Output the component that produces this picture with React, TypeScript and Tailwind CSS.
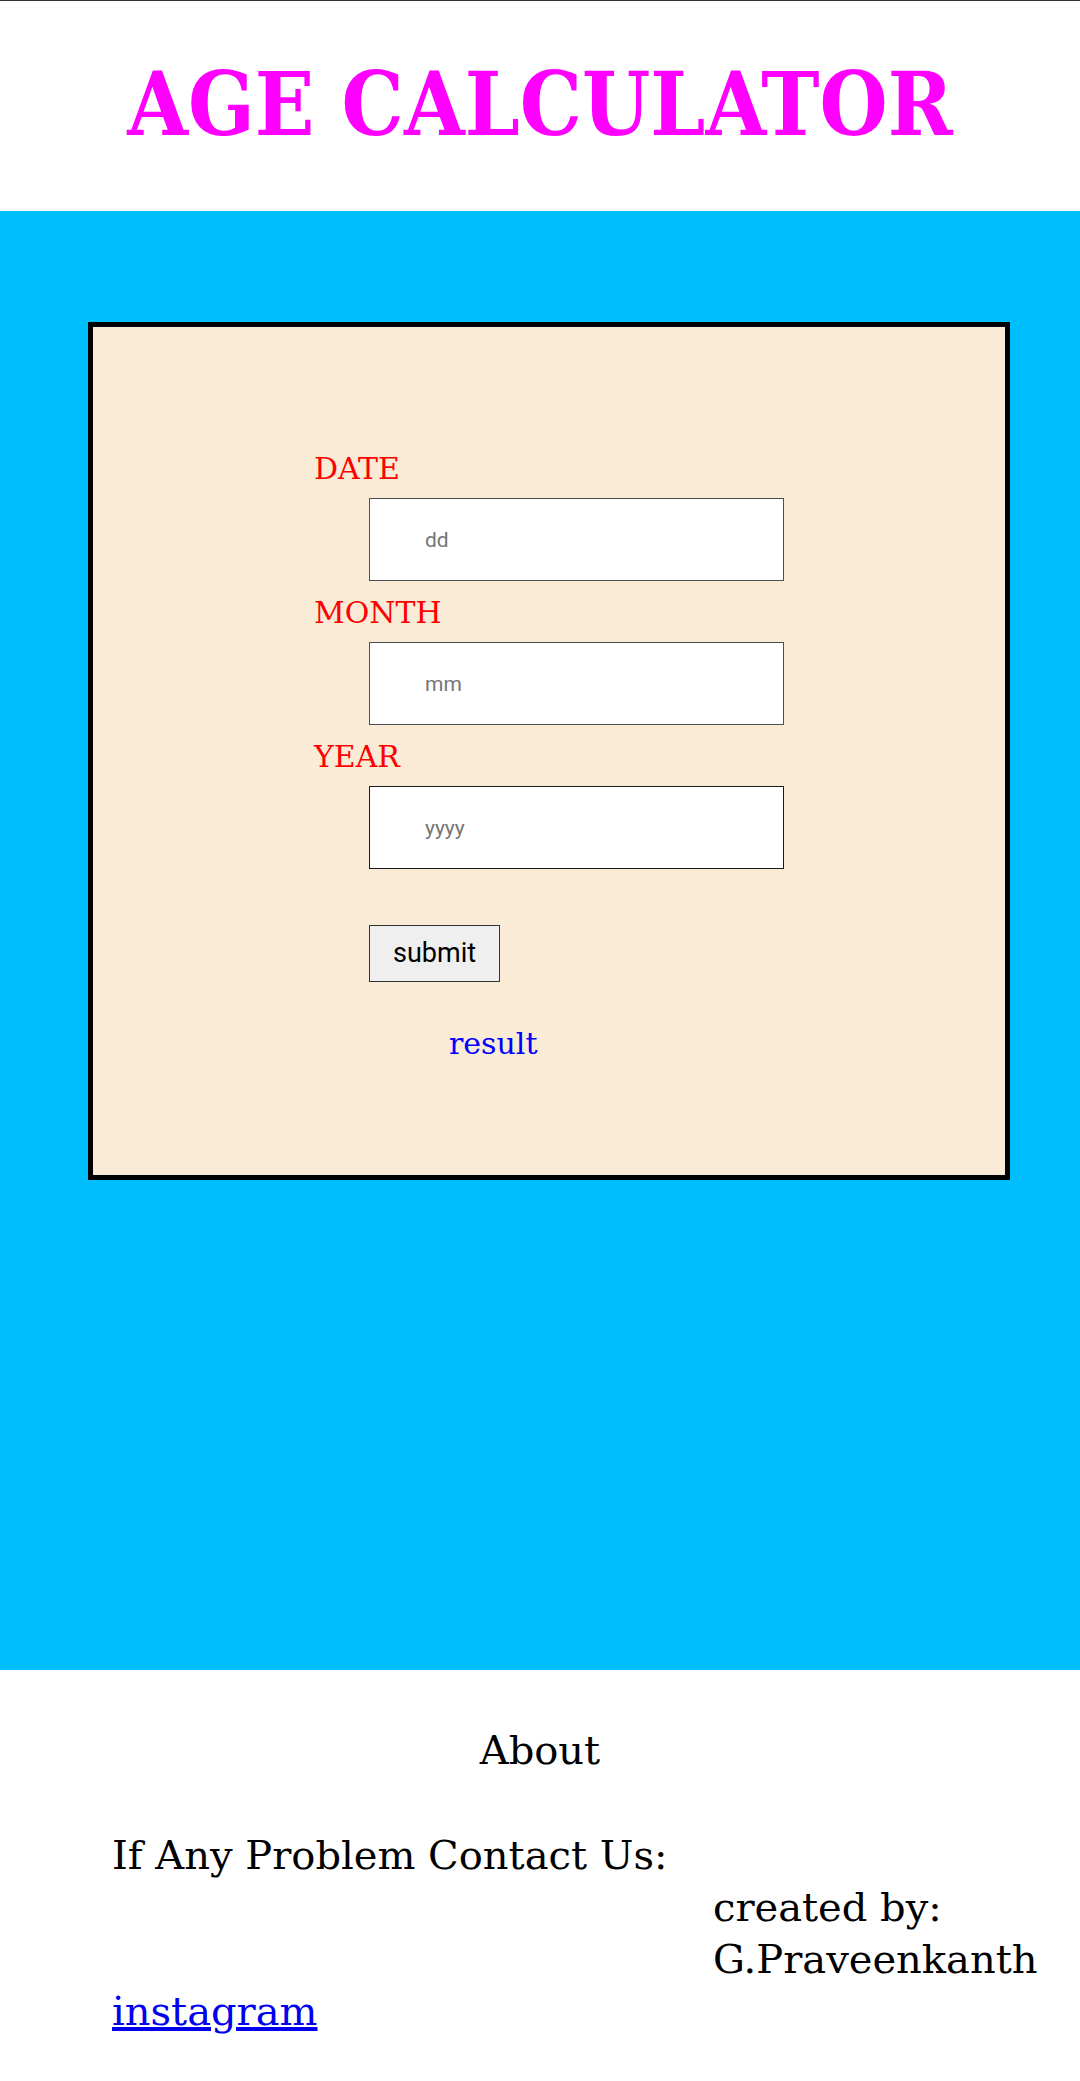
import React from 'react';

const fields = [
  { label: 'DATE', placeholder: 'dd', border: 'border-[#4d4d4d]' },
  { label: 'MONTH', placeholder: 'mm', border: 'border-[#4d4d4d]' },
  { label: 'YEAR', placeholder: 'yyyy', border: 'border-[#1a1a1a]' },
];

export default function App() {
  return (
    <div className="w-[1080px] min-h-[2081px] bg-white font-['DejaVu_Serif',serif]">
      {/* Header */}
      <header className="h-[211px] border-t border-[#333] bg-white pt-[53px]">
        <h1 className="text-center text-[87px] font-bold leading-[1.164] text-[#ff00ff] font-stretch-condensed">
          AGE CALCULATOR
        </h1>
      </header>

      {/* Calculator */}
      <main className="h-[1459px] bg-[#00bfff] pt-[111px]">
        <div className="ml-[88px] h-[858px] w-[922px] border-[5px] border-black bg-[#faebd7] pt-[124px]">
          <div className="pl-[221px]">
            {fields.map((f, i) => (
              <div key={f.label} className={i === 0 ? '' : 'mt-[14px]'}>
                <p className="text-[30px] leading-[35px] text-[#ff0000]">{f.label}</p>
                <input
                  type="text"
                  placeholder={f.placeholder}
                  className={`mt-[12px] ml-[55px] block h-[83px] w-[415px] border ${f.border} bg-white pl-[55px] font-['Roboto',sans-serif] text-[21px] text-black outline-none placeholder:text-[#757575]`}
                />
              </div>
            ))}
            <button className="mt-[56px] ml-[55px] block h-[57px] w-[131px] border border-[#333] bg-[#efefef] font-['Roboto',sans-serif] text-[27px] text-black">
              submit
            </button>
            <p className="mt-[44px] ml-[135px] text-[30px] leading-[35px] text-[#0000ff]">result</p>
          </div>
        </div>
      </main>

      {/* Footer */}
      <footer className="bg-white pt-[54px] pb-[42px] text-[40px] leading-[52px] text-black">
        <h2 className="text-center">About</h2>
        <div className="mt-[53px] pl-[112px]">
          <p>If Any Problem Contact Us:</p>
          <p className="pl-[601px]">
            created by:
            <br />
            G.Praveenkanth
          </p>
          <a href="#" className="text-[#0000ee] underline">
            instagram
          </a>
        </div>
      </footer>
    </div>
  );
}
